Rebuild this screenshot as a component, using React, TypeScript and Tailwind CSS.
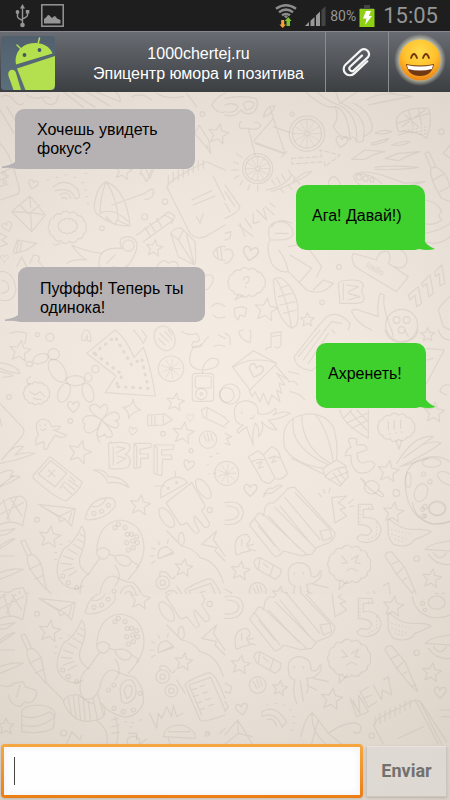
import React from "react";

const SANS = "font-['Liberation_Sans',Arial,sans-serif]";

type Message = { text: string; mine: boolean; box: string; body: string };

const MESSAGES: Message[] = [
  { text: "Хочешь увидеть фокус?", mine: false, box: "ml-[15px] mt-[17px]", body: "h-[60px] w-[180px] pl-[22px] pr-4" },
  { text: "Ага! Давай!)", mine: true, box: "mr-[25px] mt-4", body: "h-[65px] w-[129px] pl-4 pb-1" },
  { text: "Пуффф! Теперь ты одинока!", mine: false, box: "ml-[18px] mt-[17px]", body: "h-[55px] w-[187px] pl-[22px] pr-4 pt-1.5" },
  { text: "Ахренеть!", mine: true, box: "mr-6 mt-[21px]", body: "h-[65px] w-[110px] pl-3 pb-1" },
];

function Star({ x, y, r = 32, a = 0 }: { x: number; y: number; r?: number; a?: number }) {
  const pts = Array.from({ length: 10 }, (_, i) => {
    const q = ((i * 36 - 90 + a) * Math.PI) / 180;
    const k = i % 2 ? r * 0.45 : r;
    return `${(x + Math.cos(q) * k).toFixed(1)},${(y + Math.sin(q) * k).toFixed(1)}`;
  });
  return <polygon points={pts.join(" ")} />;
}

function Heart({ x, y, s = 1, a = 0 }: { x: number; y: number; s?: number; a?: number }) {
  return (
    <path
      transform={`translate(${x} ${y}) rotate(${a}) scale(${s})`}
      d="M0 16 C-10 6 -20 -2 -14 -11 C-9 -17 -2 -13 0 -6 C3 -14 12 -17 16 -9 C20 0 8 8 0 16Z"
    />
  );
}

function Wheel({ x, y, r, hub = 6 }: { x: number; y: number; r: number; hub?: number }) {
  return (
    <g>
      <circle cx={x} cy={y} r={r} />
      {r > 40 && <circle cx={x} cy={y} r={r * 0.82} />}
      <circle cx={x} cy={y} r={hub} />
      <g strokeWidth={2.5}>
        {Array.from({ length: r > 40 ? 12 : 9 }, (_, i) => {
          const q = (i * Math.PI * 2) / (r > 40 ? 12 : 9);
          return (
            <line
              key={i}
              x1={x + Math.cos(q) * hub * 1.5}
              y1={y + Math.sin(q) * hub * 1.5}
              x2={x + Math.cos(q) * r * 0.78}
              y2={y + Math.sin(q) * r * 0.78}
            />
          );
        })}
      </g>
    </g>
  );
}

function Cloud({ x, y, rx, ry }: { x: number; y: number; rx: number; ry: number }) {
  const n = 13;
  let d = "";
  for (let i = 0; i <= n; i++) {
    const q = (i / n) * Math.PI * 2;
    const px = (x + Math.cos(q) * rx).toFixed(1);
    const py = (y + Math.sin(q) * ry).toFixed(1);
    d += i ? `A${rx * 0.27} ${rx * 0.27} 0 0 1 ${px} ${py}` : `M${px} ${py}`;
  }
  return <path d={d} />;
}

function UpperDoodles() {
  return (
    <>
      <g transform="translate(0 90) scale(.33333)">
        <path d="M5 20C40 0 45 60 70 40M0 60L42 130M20 50L48 95M80 15C120 40 125 10 150 25M125 20C135 50 170 55 175 15M190 5L250 52M205 0L285 52M250 0L330 48M275 0L360 35Q365 20 340 0" />
        <path d="M395 20Q425 5 455 30M470 10Q500 30 550 20M560 10L590 50M585 130L625 180L632 190L626 150L597 105ZM625 180L620 165M635 45Q650 20 675 10M635 45Q655 75 675 65" />
        <Star x={655} y={133} r={32} a={10} />
        <circle cx={607} cy={72} r={7} />
        <path d="M0 160Q30 190 40 240M0 250L40 232L58 295Q60 312 45 315L0 330M0 270L20 262M0 290L25 282" />
        <circle cx={12} cy={250} r={5} /><circle cx={14} cy={275} r={5} /><circle cx={22} cy={258} r={3} />
        <Heart x={99} y={283} s={0.9} a={15} />
        <Heart x={22} y={410} s={0.9} a={-20} />
        <Heart x={13} y={505} s={0.7} />
        <path d="M35 365L90 318L136 375L95 425ZM35 365L95 368L136 375M90 318L92 352M92 370L95 425M60 345L85 372L120 345" />
        <Cloud x={202} y={412} rx={55} ry={42} />
        <Cloud x={203} y={408} rx={28} ry={20} />
        <path d="M180 460Q165 470 160 462" />
        <path d="M160 290Q200 260 234 300Q245 330 225 325Q215 290 165 302M180 314Q205 300 212 325M185 325Q195 318 200 328" />
        <path d="M140 270h6M168 262h5M195 255h5M222 262h5M245 278h5M255 300h4M258 320h4M262 340h4M256 250h4" />
        <path d="M283 345Q290 290 318 275Q380 300 390 408Q340 410 295 375Q280 365 283 345ZM318 275Q300 320 300 372M318 275Q350 320 355 390M300 370Q340 350 385 395M335 345L435 310Q465 285 460 310Q455 330 435 328M295 375L325 395L318 380L345 405L350 390L390 408" />
        <Star x={370} y={243} r={28} a={12} />
        <path d="M420 255L430 220L450 265L465 225M425 250L440 275L455 240" />
        <circle cx={434} cy={381} r={9} /><circle cx={495} cy={335} r={8} />
        <path d="M500 290Q520 260 620 215L675 240M500 290L570 430Q590 450 615 440L675 405M505 285v-28M520 275v-28M535 270v-28M550 262v-28M565 255v-28M580 248v-28M595 240v-28M610 235v-25M575 330L635 302M580 345L645 318M590 380L600 400L610 370M640 260L675 330" />
        <path d="M365 475Q350 440 385 440Q415 445 410 475Q405 500 385 525Q370 540 340 530M365 475Q310 470 300 500Q290 530 310 545M410 435L495 375L520 390L430 455M485 380L505 365L525 378L515 400M470 385L485 410M450 400L465 425M435 412L450 437" />
        <circle cx={385} cy={467} r={17} /><path d="M305 490Q260 485 215 465Q240 500 260 510Q220 505 200 520M320 520L345 495" />
        <Star x={463} y={475} r={26} a={8} />
        <path d="M512 430Q525 410 545 415L585 455Q590 520 583 525L535 500ZM512 430L535 450L550 420M535 450L583 525M560 435L583 525" />
        <path d="M40 485L52 450L110 460L80 480L45 490ZM55 452L50 487M65 452L60 486M640 490Q650 465 675 470M640 490Q645 510 675 512M650 475L655 505M662 472L666 508" />
        <path d="M0 430L20 440L5 450L22 462L0 470M50 530L65 500L80 530M90 520L100 495Q125 495 115 515L130 530M0 545Q40 540 48 600Q40 640 0 630M5 570Q30 575 25 600Q15 610 5 610" />
        <path d="M635 650Q650 630 675 650M640 675Q650 690 675 680M470 530Q490 500 505 520Q530 505 535 530M610 560Q640 545 640 570Q630 600 615 600" />
        <circle cx={306} cy={415} r={7} />
      </g>
      <g transform="translate(225 90) scale(.33333)">
        <path d="M0 25Q50 15 92 25Q105 40 88 65Q65 80 48 60Q30 85 0 75M0 45Q25 35 40 50Q30 70 5 66M55 40Q70 28 88 40Q85 58 62 60Z" />
        <Wheel x={246} y={131} r={53} />
        <Wheel x={98} y={236} r={45} />
        <path d="M85 155L145 85L180 190L92 158M145 85L135 50M115 80Q125 45 150 48Q140 75 115 80M70 115L90 195M70 115H45Q40 95 50 95M70 115Q100 125 108 105Q100 95 90 98M145 110L195 128M170 200L185 185M90 160L175 190" />
        <path d="M25 215L40 222M20 240H38M28 265L42 257M45 285L53 272M68 300L74 285M98 303V288M35 190L50 202" />
        <path d="M235 0Q300 60 330 50Q345 80 325 110Q345 145 365 140L375 150Q385 130 395 155Q420 160 415 140Q450 125 440 100Q430 60 385 40M330 50Q370 60 375 150M340 45Q400 70 395 155M350 40Q430 80 415 140M270 0Q300 30 340 45M330 0L345 40L405 0M420 30Q470 0 560 20Q500 30 430 45M450 0Q500 5 520 15" />
        <path d="M515 85Q535 50 610 55Q625 90 605 145Q575 120 520 125Q512 105 515 85ZM515 100L612 70M530 110L600 60M550 60L565 110M580 55L590 105M540 75L580 110" />
        <path strokeDasharray="4 9" d="M535 122L610 110M560 128L605 120M585 133L605 130" />
        <Heart x={349} y={155} s={1.1} a={10} />
        <circle cx={202} cy={72} r={6} /><circle cx={649} cy={125} r={8} />
        <path strokeDasharray="13 8" d="M200 205L290 200L285 180L345 195L300 230L298 215L200 222Z" />
        <path d="M380 208L420 180L480 185Q450 190 420 208L380 208M480 205L520 190L585 185Q550 195 520 212L480 205M440 160Q470 150 492 145Q480 160 440 165ZM500 165Q540 150 555 155Q530 170 500 165M450 232Q490 225 580 232Q540 240 450 238M450 130Q475 115 500 125Q480 135 450 130M520 135L555 125" />
        <path d="M125 300Q180 290 200 255Q215 260 205 275Q240 240 260 245Q235 270 140 305M150 285L140 270M165 280L155 262M180 270L170 252M200 255L190 240M165 295L175 307M190 285L200 297M215 272L225 282" />
        <path d="M385 260Q400 235 470 255L540 280L600 275L540 290M385 260Q395 290 430 290M390 250Q440 250 470 280" />
        <circle cx={402} cy={262} r={8} /><circle cx={422} cy={266} r={8} /><circle cx={441} cy={270} r={6} />
        <path d="M600 190L612 185L632 230Q665 245 675 290M600 190L618 235Q610 260 650 325L675 335M618 235L632 230M625 270L660 250M645 305L675 290M655 190L675 165M655 190L675 205" />
        <path d="M0 285L45 350Q40 370 0 385M0 305L30 350M0 340L15 365M310 285Q310 260 330 260Q345 270 345 285" />
        <path d="M40 405L85 440M60 385L80 415M85 370V400L105 395M95 360L125 390L115 355M120 350L148 375M60 440L45 400M135 340L150 350" />
        <Heart x={76} y={490} s={1.4} a={10} />
        <path d="M135 450Q120 400 160 395Q200 395 205 430Q200 450 160 450Q140 450 135 450ZM135 450Q120 470 140 520Q160 550 190 545L245 600Q290 620 325 580L295 570L265 600M190 470L240 460L290 530L275 560M160 480Q180 500 190 545M140 410Q160 380 200 400M195 495L260 535L225 575M150 430H190" />
        <Cloud x={65} y={577} rx={55} ry={38} />
        <path d="M55 570Q60 555 72 562Q75 575 62 580M62 590v3M40 615L30 630L55 615" />
        <path d="M145 570Q165 550 195 590Q230 640 215 705L200 715Q160 690 150 620ZM155 570Q185 620 200 715M165 595L190 585M160 620L200 610M165 645L210 635M175 670L215 660" />
        <path d="M385 490L455 510Q460 480 490 485Q500 505 490 520L550 560L515 605L390 530Q375 505 385 490ZM510 475Q550 480 545 520Q535 540 510 530M340 580Q345 570 385 570Q415 570 415 590Q405 605 415 615Q425 640 390 640L345 640ZM355 580V630M365 585L400 590L370 605M370 610L405 620L370 630" />
        <circle cx={342} cy={531} r={7} /><circle cx={291} cy={637} r={7} />
        <path d="M550 615L580 590L590 640L575 650L570 615L555 630ZM590 580L615 555L625 610L612 620L605 580L595 590ZM630 545L650 525L660 580L645 588L642 550L632 560Z" />
        <path d="M0 480Q20 470 25 495Q15 520 0 520M0 430L18 425L15 445L0 450M600 330Q640 335 650 365Q635 375 650 390Q620 410 600 400M600 430Q650 420 675 400M600 455Q640 470 675 440" />
        <Star x={123} y={660} r={36} a={8} /><Star x={247} y={690} r={22} />
        <path d="M28 655L50 650L65 655L60 680L45 675L40 690L30 680Z" />
        <path d="M380 665Q380 655 400 660L460 680Q455 650 465 610L478 615Q470 650 500 720M380 665Q395 700 440 720M270 720L305 680Q340 660 375 700L370 720M300 720L320 695L350 700" />
        <circle cx={530} cy={706} r={48} /><circle cx={515} cy={690} r={10} /><circle cx={545} cy={690} r={10} /><circle cx={530} cy={720} r={10} />
        <path d="M640 660Q650 640 675 620M640 660L655 710L675 720" />
        <text x={420} y={530} fontSize={24} fontWeight={700} transform="rotate(28 420 530)" fontFamily="Liberation Sans, sans-serif" strokeWidth={1.5}>Hello</text>
      </g>
      <g transform="translate(0 330) scale(.33333)">
        <Star x={60} y={64} r={33} a={8} />
        <path d="M30 10Q55 0 80 10L75 40M245 30Q245 0 260 0Q275 5 272 35L262 32V15L255 32ZM400 0Q420 20 430 40L440 20L425 0M545 5Q570 20 590 10Q610 40 580 35Q565 60 600 50L625 20M640 50Q660 40 675 50M655 15L675 25" />
        <circle cx={150} cy={22} r={12} /><circle cx={112} cy={14} r={6} />
        <circle cx={161} cy={73} r={17} /><ellipse cx={122} cy={86} rx={24} ry={14} transform="rotate(-20 122 86)" />
        <ellipse cx={172} cy={122} rx={22} ry={38} transform="rotate(-32 172 122)" /><ellipse cx={226} cy={152} rx={28} ry={15} />
        <ellipse cx={192} cy={188} rx={17} ry={30} transform="rotate(22 192 188)" /><ellipse cx={264} cy={188} rx={16} ry={30} transform="rotate(-18 264 188)" />
        <ellipse cx={265} cy={142} rx={11} ry={13} /><circle cx={286} cy={117} r={11} /><ellipse cx={88} cy={102} rx={10} ry={7} />
        <path d="M0 98Q50 105 60 130Q35 130 0 115M0 125Q30 130 40 138L10 142" />
        <path d="M260 70L345 0Q375 20 402 82L430 52Q450 100 466 198L316 188L348 138Z" />
        <path strokeWidth={9} strokeDasharray="2 20" d="M282 70L345 20L395 105L425 85L445 175L345 170L368 135L285 72" />
        <ellipse cx={494} cy={25} rx={30} ry={38} transform="rotate(-25 494 25)" /><path d="M480 10L505 35M495 5L515 28M475 25L495 45M505 0L515 15" />
        <Wheel x={513} y={116} r={38} hub={4} />
        <path d="M580 50Q550 110 600 120Q660 120 655 90Q635 75 615 100Q605 115 608 130M582 50L605 45" />
        <rect x={577} y={130} width={64} height={84} rx={10} /><rect x={586} y={138} width={48} height={36} rx={6} /><circle cx={604} cy={192} r={17} /><circle cx={604} cy={192} r={4} />
        <Cloud x={110} y={190} rx={38} ry={30} /><path d="M90 165Q70 150 92 140M90 185L105 195L120 185L135 200M100 205L125 210" />
        <circle cx={27} cy={201} r={7} /><Heart x={220} y={230} s={1.1} /><circle cx={211} cy={273} r={7} />
        <path d="M305 270Q260 240 270 228Q290 215 300 235Q320 210 323 238Q320 255 305 270Q340 235 355 252Q365 270 345 272Q365 280 350 295Q325 290 305 270Q280 250 255 260Q240 275 255 282Q245 300 265 310Q300 300 305 270Q345 310 335 320Q315 325 315 312Q295 330 290 310ZM305 270Q280 310 300 338" />
        <path d="M400 208Q400 232 422 240Q398 245 385 265Q390 245 368 232Q395 232 400 208Z" />
        <Star x={526} y={217} r={28} a={8} /><Star x={550} y={310} r={34} a={8} /><Star x={239} y={367} r={36} a={15} />
        <path d="M443 255L495 252L517 270L490 285L443 287ZM455 255V287M465 254V286M490 252V285M604 240L620 232L675 262M604 240L610 262L675 292M622 234L618 265" />
        <circle cx={624} cy={329} r={26} /><path d="M612 315L620 335M622 310L628 335M632 310L638 332" />
        <Heart x={398} y={303} s={0.8} a={10} /><Heart x={570} y={262} s={0.7} /><Heart x={566} y={405} s={1} a={10} /><circle cx={489} cy={311} r={7} /><circle cx={573} cy={362} r={6} />
        <path d="M110 300Q105 270 130 267Q150 270 155 290L180 288Q180 300 160 300L200 315Q190 330 165 315Q155 335 145 345Q145 360 132 358V335Q115 340 108 345Q105 325 115 315ZM120 285v4M135 283v4M122 298Q130 305 138 295" />
        <path d="M325 340Q395 330 390 355Q385 370 375 372Q400 385 385 410Q375 420 328 415ZM340 350V405M350 350L375 355L350 368M352 378L378 385L352 400M402 340H453V352L420 358V372H445V385H422V412L402 415ZM462 345H522L520 358L485 360V375H515V388H488L485 437L462 430ZM325 340L335 335M402 340L410 350V410M462 345L472 355V428" />
        <path d="M100 435L150 380L245 455Q250 470 200 512Q180 515 100 445ZM115 432L152 392L200 430L165 470ZM195 455L180 475M210 440L225 455M205 450L235 470M190 470L215 492M200 460L225 480M145 420L165 440M165 420L145 440" />
        <path d="M280 420Q315 415 325 440Q370 440 387 473Q350 450 325 460Q315 430 280 420Z" />
        <path d="M0 220L70 295Q75 310 65 320L5 390M0 265L5 290M5 390Q40 340 70 350L45 375Q80 365 105 370Q60 390 0 400M0 430Q30 415 40 425L30 440Q50 435 60 440Q30 460 0 470" />
        <path d="M630 380h6M650 370h6M620 405h6M640 430h6M625 432h4" />
        <Wheel x={680} y={430} r={36} hub={4} /><circle cx={680} cy={195} r={22} />
      </g>
      <g transform="translate(225 330) scale(.33333)">
        <path d="M45 15Q35 0 55 0M45 15Q50 30 75 38Q80 10 75 0M0 10Q20 15 15 45M122 60Q125 50 138 52V10L168 5V45Q160 60 150 50M138 20L168 15" />
        <path d="M270 0L208 80Q210 115 260 122L275 110M285 0L220 80M300 0L235 90M310 10L250 100M320 0L330 10M480 0Q490 35 530 38Q570 35 580 0M500 0L505 20M540 0L550 20" />
        <Star x={608} y={15} r={22} /><path d="M605 55L658 60L605 160M640 0Q650 30 675 30M605 90L625 85" />
        <path d="M22 110L85 62L155 100L75 180ZM25 112Q80 75 155 100M72 180L82 200L90 185L105 215L115 190L130 225L140 195L165 215L155 180L170 190L162 160L180 165L155 130L190 150L150 105" />
        <Heart x={92} y={122} s={1.3} a={15} />
        <path d="M190 125L222 132M190 155Q210 150 218 165M195 185Q225 190 240 210" />
        <circle cx={15} cy={192} r={30} />
        <path d="M30 260Q20 215 65 212Q105 220 98 250Q130 260 150 235Q160 240 145 255Q175 240 195 250Q160 270 130 270Q150 290 155 300Q130 300 110 275Q120 300 100 320Q105 290 90 280Q80 310 85 345Q70 310 65 290Q50 300 40 310Q30 300 55 285Q30 280 30 260ZM50 245v5M75 265Q85 270 88 255" />
        <path d="M178 350Q165 270 230 255Q290 240 325 290Q340 340 335 390L310 405L295 415Q200 400 178 350ZM205 265Q190 350 310 405M230 255Q230 350 315 400M270 252Q310 300 325 395M293 415L300 440L345 468L370 440L360 405L335 390M300 440Q320 415 365 410M310 450L370 425M325 430L350 465M340 420L360 450M200 385L295 432" />
        <path d="M345 240Q350 280 430 325V240M355 265L380 240M365 280L425 250M380 295L430 270M375 245L425 300M395 240L430 275" />
        <path d="M370 330Q375 320 395 328V345Q430 340 425 360L395 370Q400 410 425 395Q445 390 450 405Q435 435 400 428Q375 415 378 375L360 378Q365 355 378 352Z" />
        <Cloud x={514} y={292} rx={55} ry={36} /><path d="M490 275v25M495 310v3M508 272v25M512 307v3M527 270v25M530 305v3M512 330L522 358L530 330" />
        <Star x={628} y={248} r={32} a={5} /><Star x={490} y={425} r={34} a={8} />
        <path d="M515 400Q570 310 625 320L590 345Q630 330 648 340Q600 375 525 410M535 385L590 345M525 410L610 385M645 185Q650 160 675 165M645 185L665 195" />
        <path d="M540 460Q540 390 620 380Q650 378 675 395M540 460Q545 560 620 582Q650 585 675 575" />
        <ellipse cx={588} cy={488} rx={19} ry={28} transform="rotate(20 588 488)" /><ellipse cx={638} cy={535} rx={25} ry={22} /><ellipse cx={620} cy={398} rx={28} ry={14} /><ellipse cx={550} cy={450} rx={8} ry={22} /><ellipse cx={665} cy={445} rx={30} ry={16} transform="rotate(30 665 445)" />
        <circle cx={596} cy={432} r={6} /><circle cx={615} cy={455} r={6} /><circle cx={600} cy={530} r={7} /><circle cx={595} cy={558} r={6} />
        <path d="M70 380L100 362L115 375L140 350Q165 360 165 380L187 430Q170 455 150 445L135 460Q110 460 105 440ZM115 375L150 445M80 395Q100 385 120 390M130 385Q150 375 165 385M95 400L110 395L100 415L115 410M135 385L150 378L140 398L155 392" />
        <path d="M0 310L20 320L5 325L15 345L0 340M0 265L12 275L0 285" />
        <ellipse cx={440} cy={472} rx={22} ry={20} /><path d="M420 455Q400 440 410 448Q430 480 470 500Q485 500 460 480" />
        <circle cx={514} cy={489} r={10} /><Heart x={76} y={480} s={1.2} /><path d="M115 500Q125 470 145 475Q160 460 172 468Q150 480 140 490Q125 485 115 500" />
        <path d="M280 490L290 500M295 478L300 490M315 475L312 488M370 520L385 508M375 530L388 528" />
      </g>
    </>
  );
}

function LowerDoodles() {
  return (
    <g transform="translate(0 570) scale(.33333)">
      <path d="M115 85L226 98L215 150L195 130L180 138L175 122ZM115 85L195 130M226 98L175 122M215 110L205 140" />
      <path d="M258 120Q270 70 320 65Q350 65 345 90Q320 130 265 132Q250 130 258 120ZM275 90Q300 100 320 65" />
      <circle cx={282} cy={112} r={6} /><circle cx={305} cy={105} r={6} /><circle cx={325} cy={88} r={6} />
      <Star x={420} y={88} r={32} a={8} /><Star x={149} y={184} r={34} a={8} /><Star x={551} y={276} r={28} a={8} /><circle cx={111} cy={131} r={7} />
      <path d="M483 65Q475 20 520 5Q550 0 562 20ZM498 80L575 20L610 80Q620 90 605 105L628 140Q630 155 615 155L585 120Q575 125 598 165Q590 180 580 165L560 140Q545 150 540 145ZM495 30L465 30M527 5L525 -15" />
      <circle cx={505} cy={37} r={3} /><circle cx={530} cy={20} r={3} />
      <ellipse cx={500} cy={125} rx={16} ry={34} transform="rotate(-35 500 125)" /><ellipse cx={610} cy={38} rx={16} ry={34} transform="rotate(-35 610 38)" /><circle cx={629} cy={102} r={8} />
      <path d="M0 85Q20 65 60 60Q90 70 75 110L68 150Q40 130 0 145M10 70L30 140M50 62L20 130M70 80L0 115M30 65L65 120" />
      <path d="M0 165L45 158L20 175L0 178M0 210Q25 190 45 188Q20 205 0 218M0 240H42M0 290Q40 275 70 280Q40 295 0 310" />
      <path d="M62 196L75 192L95 235Q125 245 130 300L140 340L190 390M62 196L82 240Q75 270 125 325L138 340M82 240L95 235M88 280L125 262M105 310L132 298" />
      <path d="M290 225Q295 140 360 132Q430 140 432 215Q432 250 410 275M290 225Q290 245 310 250Q330 245 328 225Q310 205 290 225ZM328 235L345 240Q380 230 395 255Q390 275 365 268Q345 255 345 240M395 255L418 270L385 310M300 245L265 295Q240 310 240 350Q240 395 280 400M345 268Q370 300 345 330" />
      <path d="M245 150Q265 175 245 230Q225 270 265 295M245 150Q225 200 190 220Q155 290 185 320Q215 350 250 330M190 240L220 250M185 262L215 265M190 285L220 275M205 300L230 285M205 220L232 235M220 205L245 220M232 190L252 200M240 175L255 182" />
      <path d="M190 395Q200 370 235 375Q280 410 300 350Q310 300 340 300Q380 320 400 320Q435 350 430 400Q410 445 370 440Q325 430 305 400Q330 440 290 450Q220 470 190 395ZM360 360Q365 325 395 330Q415 350 405 380Q385 410 365 395ZM205 385L215 435M220 378L228 448M235 378L242 452M250 390L256 454M265 395L272 453M280 385L292 450M292 365L310 435M372 360Q380 340 395 350Q400 380 380 385ZM345 440Q360 480 350 522M290 452Q330 480 320 522M335 450L355 445M335 470L358 465M335 490L358 487" />
      {[[355, 145], [375, 155], [345, 155], [395, 175], [382, 175], [398, 195], [412, 200], [380, 200], [400, 215], [385, 222], [410, 182], [342, 345], [325, 360], [342, 415], [370, 425], [400, 420], [420, 370], [188, 300], [205, 320], [230, 335]].map(([x, y]) => (
        <circle key={`${x}-${y}`} cx={x} cy={y} r={6} />
      ))}
      <path d="M180 205h5M205 195h4M165 230h5M165 250h4M375 455h5M395 458h5M420 450h5M390 470h4" />
      <path d="M475 248Q470 215 500 212L520 228ZM475 248L522 232M455 215L465 220M475 195L478 205M505 190L502 202M452 240H462M455 262L465 255M500 165L545 210Q560 200 548 170Q535 165 535 195M545 210Q580 215 600 245Q650 255 670 320M605 205L650 165L640 190L675 240M605 205L650 215L645 225L675 255" />
      <circle cx={488} cy={320} r={20} /><circle cx={514} cy={362} r={19} /><circle cx={488} cy={320} r={8} /><circle cx={514} cy={362} r={8} /><path d="M480 300Q475 280 500 290Q520 320 525 300M530 330L555 370" />
      <path d="M555 345Q555 335 625 308Q645 305 675 385M555 345L600 450Q605 460 675 435M567 345L632 322L675 420M567 345L605 435M575 360l15 -5M600 350l15 -5M580 380l15 -5M608 370l15 -5M590 400l15 -5M617 390l15 -5M598 420l15 -5M625 408l15 -5" />
      <path d="M448 430L470 475L475 430L485 445L500 410L515 440L520 405L530 440L550 430M490 500Q495 465 545 465Q590 480 585 505M490 500L585 505M505 485H570M510 522L505 505M385 490H410V510M660 490L675 475" />
      <path d="M0 345Q30 355 40 340L70 335L75 350L105 360Q115 370 105 385Q90 405 75 395L60 410Q30 405 25 375M60 345L50 380M65 425Q70 405 120 405Q160 410 165 430L160 475Q120 495 65 485ZM65 435Q90 455 150 425L165 440Q120 480 65 465M200 522L215 485L240 510L245 495" />
      <Star x={18} y={470} r={26} /><circle cx={191} cy={489} r={9} /><Cloud x={400} y={515} rx={18} ry={15} />
      <path d="M420 522L440 508M0 30L40 0M620 490h6" /><circle cx={622} cy={491} r={7} />
      <g transform="translate(675 0)">
        <path d="M75 145L100 112Q110 108 115 120L120 95Q130 75 145 82L178 50Q190 30 210 35L330 170Q330 195 300 205L275 215L260 235Q240 235 230 240L175 225Q165 240 150 243L75 150ZM90 130L165 225M115 115L245 235M150 95L270 215M180 65L285 190M210 50L315 160M100 150L150 210M130 120L220 215M165 90L255 200M285 165L315 160L320 185L295 195ZM320 65L330 140L365 120L345 100L362 95L340 80L365 60Z" />
        <path d="M400 85H440L445 100H415V125Q460 120 468 160Q465 195 425 200Q400 200 395 185L410 175Q430 185 440 165Q435 145 400 145Z" />
        <path d="M490 160Q485 130 495 130Q530 165 580 160Q610 160 618 168Q600 180 570 190Q550 220 505 205Q485 180 490 160Z" /><Star x={505} y={110} r={32} a={8} />
        <path strokeDasharray="2 9" d="M500 160L560 175M500 175L545 190M510 190L540 198M405 92V140M430 95H438M455 140V175M430 190L450 180" />
        <path d="M562 80Q570 130 620 142Q650 145 675 135M600 220Q620 200 675 195M600 220L675 225M610 235Q635 270 675 265M625 230Q645 260 665 230" />
        <ellipse cx={635} cy={98} rx={25} ry={20} /><circle cx={593} cy={100} r={6} /><circle cx={600} cy={120} r={5} />
        <path d="M0 80Q50 70 55 110Q50 150 0 145M5 90Q40 90 42 112Q35 135 0 132M30 205Q35 175 65 175Q85 190 65 205L75 225L50 230Q40 240 32 235ZM65 210L85 205M75 220L92 225M50 190V210" />
        <Cloud x={373} y={265} rx={62} ry={50} /><path d="M350 240L368 260L350 262M380 250L400 238L390 260L405 262M365 285Q380 270 395 285M345 315L342 340L368 315" />
        <path d="M480 240Q482 225 500 228L540 275L570 345L578 365L560 350L515 295ZM500 265L520 255M560 350L572 342M515 295L535 275M545 305L535 312" />
        <Star x={46} y={285} r={30} a={8} /><Star x={164} y={355} r={24} a={8} /><Star x={320} y={388} r={34} a={8} /><Star x={620} y={308} r={30} a={8} />
        <path d="M87 260Q90 245 105 245L168 280Q170 300 150 310L95 278ZM105 245L100 280M145 268L135 300M115 262L130 275" />
        <circle cx={98} cy={345} r={25} /><path d="M85 335L95 355M95 328L103 352M105 328L112 348" />
        <path d="M190 300Q185 262 225 260Q260 265 258 300Q275 310 285 285Q290 280 288 300Q275 325 245 325Q255 350 245 370M190 300Q190 325 210 330Q200 365 215 400M225 330L235 395M208 290v5M235 290v5M265 325L310 335M245 345L275 360" />
        <path d="M375 385L405 430L400 375L430 425L395 440L375 385M405 365L430 352M405 365L430 412L455 395M415 385L440 375M445 345L470 390L472 360L500 375L490 320L475 330M385 392L400 425" />
        <path d="M110 425Q150 400 185 455L172 472Q150 420 112 440ZM125 450Q145 440 155 468M0 340L20 350L15 370L0 365M0 395L10 410L0 425" />
        <path d="M125 405h4M150 400h4M175 405h4M195 420h4M205 440h4M205 460h4M200 480h4" />
        <Heart x={50} y={417} s={1.1} a={-10} /><Heart x={645} y={367} s={1.1} /><circle cx={575} cy={248} r={8} /><circle cx={440} cy={497} r={8} />
        <path d="M228 500Q240 440 262 428L280 450L310 490Q350 460 390 458Q415 465 405 485Q395 495 385 485M262 428Q255 480 300 520M280 450L260 520M310 490L350 522M0 495L38 450L82 522M38 450L40 490L0 522M40 490L82 500" />
        <path d="M445 465L460 445L570 390L640 522M445 465L475 522M450 465v-25M465 460v-30M480 452v-28M495 445v-28M510 437v-28M525 430v-28M540 422v-28M555 415v-25M520 505L595 470M580 390L590 400L665 515M570 390L585 395L650 522M645 420h30M650 440h25" />
      </g>
    </g>
  );
}

function Wallpaper() {
  return (
    <svg
      aria-hidden="true"
      className="absolute inset-0 h-full w-full"
      viewBox="0 92 450 708"
      preserveAspectRatio="xMidYMin slice"
    >
      <defs>
        <radialGradient id="glow" gradientUnits="userSpaceOnUse" cx="215" cy="380" r="370">
          <stop offset="0" stopColor="#f5ede4" />
          <stop offset=".5" stopColor="#efe6dd" />
          <stop offset="1" stopColor="#e0d7ce" />
        </radialGradient>
        <radialGradient id="glowLow" gradientUnits="userSpaceOnUse" cx="215" cy="500" r="390">
          <stop offset="0" stopColor="#f3ebe2" />
          <stop offset=".45" stopColor="#eae1d8" />
          <stop offset="1" stopColor="#d8cfc5" />
        </radialGradient>
        <clipPath id="upper"><rect x="0" y="92" width="450" height="502" /></clipPath>
        <clipPath id="lower"><rect x="0" y="594" width="450" height="206" /></clipPath>
      </defs>
      <rect x="0" y="92" width="450" height="502" fill="url(#glow)" />
      <rect x="0" y="594" width="450" height="206" fill="url(#glowLow)" />
      <g fill="none" stroke="#a89c90" strokeOpacity=".2" strokeWidth="3.5" strokeLinejoin="round" strokeLinecap="round">
        <g clipPath="url(#upper)">
          <UpperDoodles />
          <g transform="translate(0 -94)"><LowerDoodles /></g>
        </g>
        <g clipPath="url(#lower)"><LowerDoodles /></g>
      </g>
    </svg>
  );
}

function StatusBar() {
  return (
    <div className="flex h-[31px] shrink-0 items-center bg-[#1e1e1e] pl-[15px] pr-3 font-[Roboto,sans-serif] text-[#969696]">
      <svg width="15" height="24" viewBox="0 0 15 24" fill="none" stroke="#969696" strokeWidth="1.4">
        <path d="M7.5 4v16M2.5 9v3.5q0 2 5 3.8M12.500 8v3q0 2-5 3.800" />
        <path d="M7.500 0L10 4.500H5Z" fill="#969696" stroke="none" />
        <circle cx="7.500" cy="21" r="2.300" fill="#969696" stroke="none" />
        <circle cx="2.500" cy="8" r="1.900" fill="#969696" stroke="none" />
        <rect x="10.800" y="6" width="3.500" height="3.500" fill="#969696" stroke="none" />
      </svg>
      <svg className="ml-[11px]" width="23" height="23" viewBox="0 0 23 23">
        <rect x=".8" y=".8" width="21.400" height="21.400" fill="none" stroke="#969696" strokeWidth="1.500" />
        <path d="M3 19.500V15l2.500-2Q6 11 8 11L11 14 13.500 12Q15 12 16 14.500L19.500 16V19.500Z" fill="#969696" />
      </svg>
      <div className="flex-1" />
      <svg width="22" height="24" viewBox="0 0 22 24" fill="none">
        <g stroke="#8c8c8c" strokeWidth="2.500">
          <path d="M1 4.800Q11-2.200 21 4.800M4 8.200Q11 3 18 8.200M7 11.300Q11 8.500 15 11.300" />
        </g>
        <path d="M9 12.200L11 11.200L13 12.200L11 14.500Z" fill="#8c8c8c" />
        <path d="M6.200 16h3v4.500H11L7.700 24 4.500 20.500h1.700Z" fill="#f7a23c" />
        <path d="M11.500 22V17H9.800L13.200 13l3.400 4H15v5Z" fill="#7cc62c" />
      </svg>
      <svg className="ml-2" width="21" height="22" viewBox="0 0 21 22">
        <path d="M0 21L4 17V21ZM5.500 21V15.700L9.500 12V21ZM11 21V10.500L15 6.500V21Z" fill="#9a9a9a" />
        <path d="M16.500 21V5L20.500 1V21Z" fill="#444" />
      </svg>
      <span className="ml-1 text-sm">80%</span>
      <svg className="ml-[3px]" width="16" height="24" viewBox="0 0 16 24">
        <path d="M5 1h6v3h4v5H1V4h4Z" fill="#444" />
        <rect x=".5" y="5" width="15" height="18" fill="#8fd014" />
        <path d="M7 7h5L9.800 12H13L6 21l1.500-6.500H4Z" fill="#fff" />
      </svg>
      <time className="ml-2 text-[22px] leading-6">15:05</time>
    </div>
  );
}

function Header() {
  return (
    <header className="flex h-[61px] shrink-0 border-t border-[#85888c] bg-linear-to-b from-[#696c72] to-[#3c3f42]">
      <svg className="ml-px mt-1 shrink-0" width="55" height="55" viewBox="0 0 55 55" role="img" aria-label="Android">
        <defs>
          <linearGradient id="tile" x1="0" y1="0" x2="0" y2="1"><stop stopColor="#52606e" /><stop offset="1" stopColor="#5a6e7c" /></linearGradient>
          <clipPath id="tileClip"><rect width="54" height="54" rx="3" /></clipPath>
        </defs>
        <rect width="54" height="54" rx="3" fill="url(#tile)" />
        <g clipPath="url(#tileClip)" fill="#b4df4e">
          <path d="M15 28.500C13 19 18 11 27 8C37 5 48 8 51.500 17.500Z" />
          <path d="M16 9L20 13M38.500 2L37 8" stroke="#b4df4e" strokeWidth="1.500" strokeLinecap="round" />
          <path d="M16 32.500L54 20V49Q54 54 49 54H24.500Z" />
          <path d="M7.500 40Q6.500 35 10 34Q13.500 33 15 37L20 54H12.500Z" />
        </g>
        <circle cx="23.500" cy="19" r="1.900" fill="#40566a" /><circle cx="38.500" cy="14" r="1.900" fill="#40566a" />
      </svg>
      <h1 className={`flex-1 self-center pl-4 pt-1 text-center text-base leading-5 text-white ${SANS}`}>
        1000chertej.ru
        <br />
        Эпицентр юмора и позитива
      </h1>
      <button type="button" aria-label="Прикрепить" className="flex w-[63px] items-center justify-center border-l border-[#8b8e91]">
        <svg width="32" height="30" viewBox="-16 -15 32 30" fill="none" stroke="#f4f4f4" strokeWidth="2.200" strokeLinecap="round">
          <path transform="rotate(-43)" d="M8 6.500H-10A6.200 6.200 0 0 1-10-5.900H11A5 5 0 0 1 11 4H-8A2.600 2.600 0 0 1-8-1.300H8" />
        </svg>
      </button>
      <button type="button" aria-label="Смайлики" className="flex w-[62px] items-center justify-center overflow-hidden border-l border-[#8b8e91] pb-1">
        <svg width="54" height="54" viewBox="-27 -27 54 54">
          <defs>
            <radialGradient id="halo"><stop offset=".72" stopColor="#fdfbd8" stopOpacity=".75" /><stop offset="1" stopColor="#fdfbd8" stopOpacity="0" /></radialGradient>
            <radialGradient id="face" cx=".5" cy=".3" r=".75"><stop stopColor="#ffdc4d" /><stop offset=".55" stopColor="#ffbf2b" /><stop offset="1" stopColor="#ea7a12" /></radialGradient>
          </defs>
          <circle r="26" fill="url(#halo)" />
          <circle r="20.500" fill="url(#face)" />
          <path d="M-9-2Q-6-10-3-2M3-2Q6-10 9-2" fill="none" stroke="#70340b" strokeWidth="1.800" strokeLinecap="round" />
          <path d="M-14 4Q0 7 14 4Q12 16 0 16Q-12 16-14 4Z" fill="#723813" />
          <path d="M-13 5Q0 8 13 5L12 9Q0 12-12 9Z" fill="#fff" />
        </svg>
      </button>
    </header>
  );
}

function Bubble({ text, mine, box, body }: Message) {
  return (
    <li className={`relative ${box} ${mine ? "self-end" : "self-start"}`}>
      <p
        className={`flex items-center text-base leading-[19px] text-black ${SANS} ${body} ${
          mine ? "rounded-[10px] bg-[#40d02e]" : "rounded-[9px] bg-[#b6b2b4]"
        }`}
      >
        {text}
      </p>
      {mine ? (
        <svg className="absolute -right-2.5 bottom-0 text-[#40d02e]" width="18" height="10" viewBox="0 0 18 10">
          <path d="M0 0H7Q10 6 18 9Q10 11 2 9Z" fill="currentColor" />
        </svg>
      ) : (
        <svg className="absolute -left-[13px] bottom-0 text-[#b6b2b4]" width="24" height="10" viewBox="0 0 24 10">
          <path d="M13 0H24V10H15Q8 8 0 9V7.500Q9 6 13 3Z" fill="currentColor" />
        </svg>
      )}
    </li>
  );
}

export default function App() {
  return (
    <div className="flex min-h-screen flex-col">
      <StatusBar />
      <Header />
      <main className="relative flex flex-1 flex-col overflow-hidden bg-[#ebe2d9]">
        <Wallpaper />
        <ul className="relative flex flex-1 flex-col">
          {MESSAGES.map((m) => (
            <Bubble key={m.text} {...m} />
          ))}
        </ul>
        <form className="relative flex items-center gap-[3px] pb-0.5 pl-px pr-[3px]" onSubmit={(e) => e.preventDefault()}>
          <div className="relative min-w-0 flex-1 rounded-[4px] bg-linear-to-b from-[#f5a742] to-[#ec7d12] p-[3px] shadow-sm">
            <input
              type="text"
              aria-label="Mensaje"
              className="block h-12 w-full bg-[#fefefe] px-2.5 font-[Roboto,sans-serif] text-lg shadow-[inset_0_0_8px_#f0f0f0] outline-none"
            />
            <span aria-hidden="true" className="absolute left-[13px] top-[13px] h-7 w-px bg-[#444]" />
          </div>
          <button
            type="submit"
            className="h-[51px] w-[81px] border border-[#cbc5be] border-t-[#e8e3dd] bg-[#dedad4]/80 font-[Roboto,sans-serif] text-lg font-bold text-[#73716e] shadow-sm"
          >
            Enviar
          </button>
        </form>
      </main>
    </div>
  );
}
